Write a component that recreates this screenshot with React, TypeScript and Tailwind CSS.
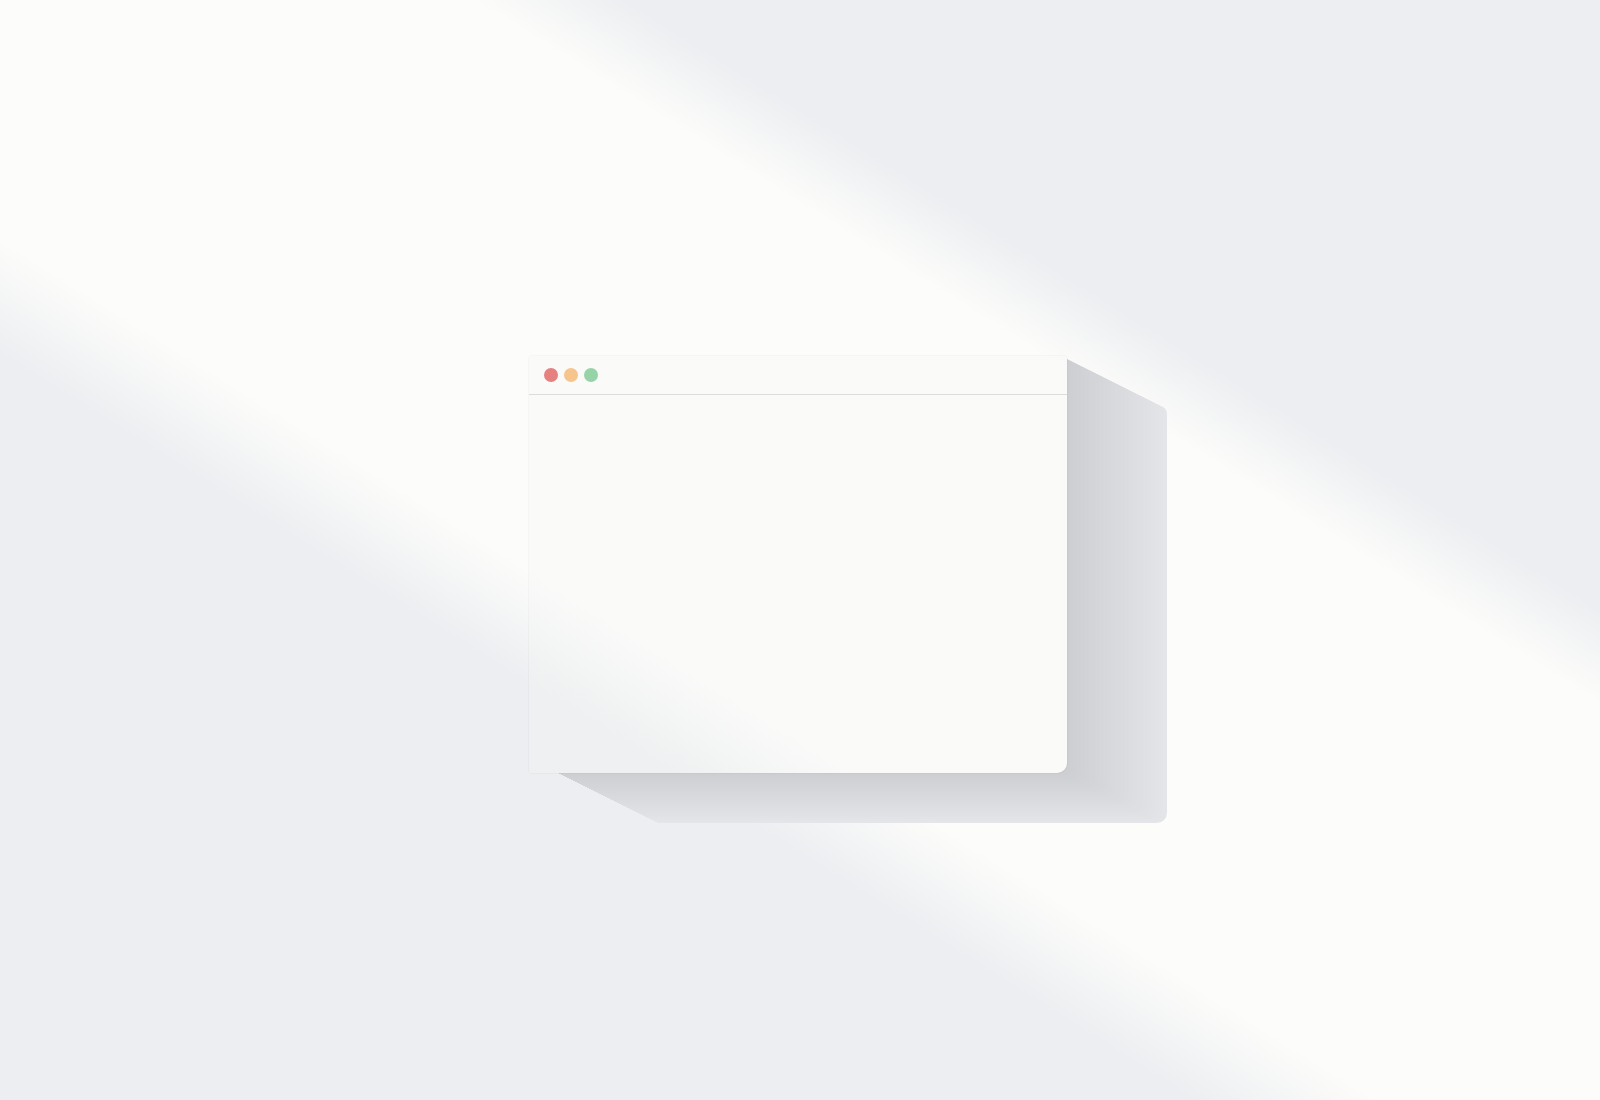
import React from 'react'

// long diagonal shadow, built as a stack of offset copies that fade out
const longShadow = (() => {
  const steps = 50
  const from = [204, 206, 209]
  const to = [227, 229, 232]
  const layers: string[] = []
  for (let i = 1; i <= steps; i++) {
    const t = i / steps
    const c = from.map((v, k) => Math.round(v + (to[k] - v) * t))
    layers.push(`${i * 2}px ${i}px 0 rgb(${c[0]},${c[1]},${c[2]})`)
  }
  return layers.join(', ')
})()

function TrafficLights() {
  return (
    <div className="flex items-center gap-[6px]">
      <span className="w-[14px] h-[14px] rounded-full bg-[#e5817f]" />
      <span className="w-[14px] h-[14px] rounded-full bg-[#f6c48d]" />
      <span className="w-[14px] h-[14px] rounded-full bg-[#96d3a6]" />
    </div>
  )
}

function BrowserWindow() {
  return (
    <div className="relative w-[538px] h-[417px]">
      {/* shadow caster, sits behind the window */}
      <div
        className="absolute top-0 bottom-0 right-0 left-[28px] rounded-tr-[8px] rounded-br-[10px]"
        style={{ boxShadow: longShadow }}
      />

      <div className="relative h-full flex flex-col rounded-tl-[3px] rounded-bl-[3px] rounded-tr-[3px] rounded-br-[10px] shadow-[0_0_0_1px_rgba(0,0,0,0.025)] bg-fixed bg-[linear-gradient(212deg,#eef0f2_0%,#eef0f2_29%,#fafaf9_33.5%,#fafaf9_59%,#eef0f1_64.5%,#eef0f1_100%)]">
        {/* Title bar */}
        <div className="h-[39px] flex items-center pl-[15px] border-b border-[#dcdcdb]">
          <TrafficLights />
        </div>

        {/* Empty content */}
        <div className="flex-1" />
      </div>
    </div>
  )
}

export default function App() {
  return (
    <div className="w-[1600px] h-[1100px] flex items-center justify-center pt-[29px] pr-[4px] bg-[linear-gradient(212deg,#eceef1_0%,#eceef1_29%,#fcfcfa_33.5%,#fcfcfa_59%,#eceef1_64.5%,#eceef1_100%)]">
      <BrowserWindow />
    </div>
  )
}
